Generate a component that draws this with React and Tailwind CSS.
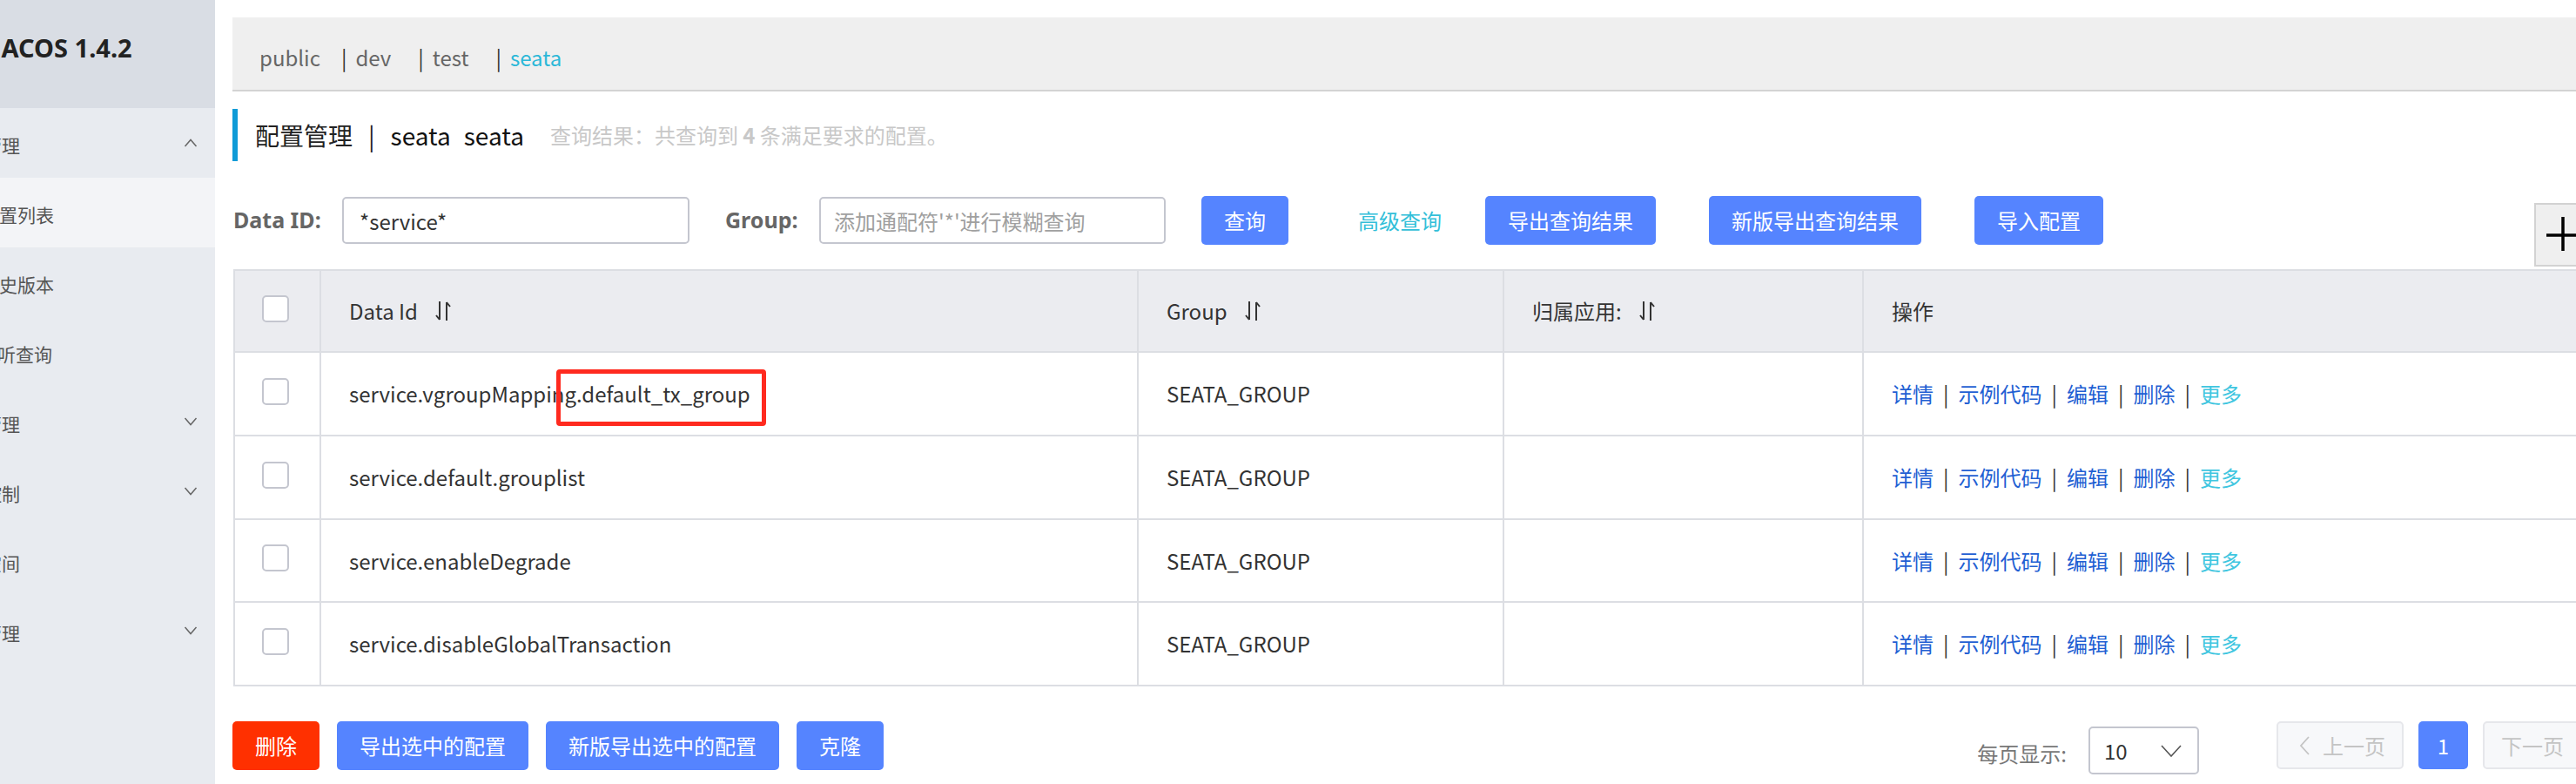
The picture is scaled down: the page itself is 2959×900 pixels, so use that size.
import React from "react";

const menu = [
  { label: "配置管理", shift: "-ml-[61px]", arrow: "up" },
  { label: "配置列表", shift: "-ml-[22px]", active: true },
  { label: "历史版本", shift: "-ml-[22px]" },
  { label: "监听查询", shift: "-ml-[24px]" },
  { label: "服务管理", shift: "-ml-[61px]", arrow: "down" },
  { label: "权限控制", shift: "-ml-[61px]", arrow: "down" },
  { label: "命名空间", shift: "-ml-[61px]" },
  { label: "集群管理", shift: "-ml-[61px]", arrow: "down" },
];

const rows = [
  "service.vgroupMapping.default_tx_group",
  "service.default.grouplist",
  "service.enableDegrade",
  "service.disableGlobalTransaction",
];

const rowHeights = ["h-[96px]", "h-[96px]", "h-[95px]", "h-[96px]"];

function Chevron({ dir }) {
  return (
    <svg width="16" height="10" viewBox="0 0 16 10" fill="none" stroke="#666" strokeWidth="1.5">
      {dir === "up" ? <path d="M1.5 9L8 1.5 14.5 9" /> : <path d="M1.5 1L8 8.5 14.5 1" />}
    </svg>
  );
}

function SortIcon() {
  return (
    <svg width="20" height="26" viewBox="0 0 20 26" fill="none" stroke="#333" strokeWidth="2">
      <path d="M6 2v21M6 23l-4-5M14 24V3M14 3l4 5" />
    </svg>
  );
}

function Checkbox() {
  return <div className="w-[31px] h-[31px] border-2 border-[#c4c6cf] rounded-[5px] bg-white" />;
}

function BlueButton({ children, className = "" }) {
  return (
    <button className={"h-[56px] px-[26px] rounded-[5px] bg-[#5584ff] text-white text-[24px] whitespace-nowrap " + className}>
      {children}
    </button>
  );
}

const grid = "grid grid-cols-[99px_939px_420px_413px_1fr] border-b-2 border-[#dcdee3]";
const cell = "flex items-center pl-[32px] border-r-2 border-[#dcdee3]";

export default function App() {
  return (
    <div className="relative flex w-[2959px] h-[900px] overflow-hidden bg-white text-[#333] font-['Noto_Sans_CJK_SC',sans-serif]">
      {/* 侧边栏 (左侧被裁切) */}
      <aside className="w-[247px] shrink-0 bg-[#e8ebf0] overflow-hidden">
        <div className="h-[124px] bg-[#d9dde4] flex items-center pb-[14px]">
          <span className="-ml-[22px] whitespace-nowrap font-['Noto_Sans',sans-serif] font-bold text-[29px] text-[#222]">
            NACOS 1.4.2
          </span>
        </div>
        {menu.map((m) => (
          <div
            key={m.label}
            className={
              "h-[80px] flex items-center justify-between pr-[20px] " + (m.active ? "bg-[#f3f4f7]" : "")
            }
          >
            <span className={m.shift + " pt-[5px] whitespace-nowrap text-[21px] text-[#555]"}>{m.label}</span>
            {m.arrow && <Chevron dir={m.arrow} />}
          </div>
        ))}
      </aside>

      {/* 主体 */}
      <main className="w-[2751px] shrink-0 pl-[20px] pt-[20px]">
        {/* 命名空间 */}
        <div className="h-[85px] bg-[#efefef] border-b-2 border-[#d3d3d3] flex items-center pl-[31px] pt-[8px] gap-[31px] text-[24px] text-[#666]">
          <span className="-mr-[7px]">public</span>
          {["dev", "test", "seata"].map((ns) => (
            <span key={ns} className="flex items-center">
              <span className="mr-[10px] text-[#333]">|</span>
              <span className={ns === "seata" ? "text-[#2bb8d8]" : ""}>{ns}</span>
            </span>
          ))}
        </div>

        {/* 标题 */}
        <div className="mt-[20px] h-[60px] border-l-[6px] border-[#0f9bd7] pl-[20px] flex items-center whitespace-nowrap">
          <span className="text-[28px] text-[#222]">配置管理</span>
          <span className="ml-[18px] text-[28px] text-[#222]">|</span>
          <span className="ml-[18px] text-[28px] text-[#111]">seata</span>
          <span className="ml-[15px] text-[28px] text-[#111]">seata</span>
          <span className="ml-[30px] text-[24px] text-[#c8c8c8]">
            查询结果：共查询到 <b className="font-bold">4</b> 条满足要求的配置。
          </span>
        </div>

        {/* 查询条件 */}
        <div className="mt-[40px] h-[56px] flex items-center whitespace-nowrap text-[24px]">
          <span className="w-[102px] pl-[1px] font-['Noto_Sans',sans-serif] font-bold text-[25px] text-[#666]">Data ID:</span>
          <input
            readOnly
            defaultValue="*service*"
            className="ml-[24px] w-[399px] h-[54px] border-2 border-[#c4c6cf] rounded-[5px] px-[18px] text-[24px] text-[#333] outline-none"
          />
          <span className="ml-[41px] w-[82px] font-['Noto_Sans',sans-serif] font-bold text-[25px] text-[#666]">Group:</span>
          <input
            readOnly
            placeholder="添加通配符'*'进行模糊查询"
            className="ml-[26px] w-[398px] h-[54px] border-2 border-[#c4c6cf] rounded-[5px] px-[15px] text-[24px] outline-none placeholder:text-[#a0a0a0]"
          />
          <BlueButton className="ml-[41px]">查询</BlueButton>
          <span className="ml-[80px] text-[#33bfd9]">高级查询</span>
          <BlueButton className="ml-[50px]">导出查询结果</BlueButton>
          <BlueButton className="ml-[61px]">新版导出查询结果</BlueButton>
          <BlueButton className="ml-[61px]">导入配置</BlueButton>
        </div>

        {/* 表格 */}
        <div className="mt-[28px] ml-[1px] border-t-2 border-l-2 border-[#dcdee3] text-[24px] whitespace-nowrap">
          <div className={grid + " h-[94px] bg-[#ebecf0]"}>
            <div className="flex items-center pl-[31px] pb-[6px] border-r-2 border-[#dcdee3]">
              <Checkbox />
            </div>
            <div className={cell + " gap-[19px]"}>
              Data Id <SortIcon />
            </div>
            <div className={cell + " gap-[19px]"}>
              Group <SortIcon />
            </div>
            <div className={cell + " gap-[19px]"}>
              归属应用: <SortIcon />
            </div>
            <div className={cell}>操作</div>
          </div>
          {rows.map((r, i) => (
            <div key={r} className={grid + " " + rowHeights[i]}>
              <div className="flex items-center pl-[31px] pb-[6px] border-r-2 border-[#dcdee3]">
                <Checkbox />
              </div>
              <div className={cell}>{r}</div>
              <div className={cell}>SEATA_GROUP</div>
              <div className={cell} />
              <div className={cell + " text-[#1f5fd3]"}>
                {["详情", "示例代码", "编辑", "删除"].map((op) => (
                  <React.Fragment key={op}>
                    <span>{op}</span>
                    <span className="mx-[11px] text-[#333]">|</span>
                  </React.Fragment>
                ))}
                <span className="text-[#3fc6e0]">更多</span>
              </div>
            </div>
          ))}
        </div>

        {/* 底部 */}
        <div className="mt-[40px] flex items-start justify-between text-[24px] whitespace-nowrap">
          <div className="flex gap-[20px]">
            <button className="h-[56px] px-[26px] rounded-[5px] bg-[#ff3000] text-white">删除</button>
            <BlueButton>导出选中的配置</BlueButton>
            <BlueButton>新版导出选中的配置</BlueButton>
            <BlueButton>克隆</BlueButton>
          </div>
          <div className="flex items-start">
            <span className="mt-[19px] text-[#777]">每页显示:</span>
            <div className="ml-[25px] mt-[6px] w-[127px] h-[55px] border-2 border-[#c4c6cf] rounded-[5px] flex items-center justify-between pl-[16px] pr-[18px]">
              <span className="text-[#333]">10</span>
              <svg width="24" height="14" viewBox="0 0 24 14" fill="none" stroke="#555" strokeWidth="1.6">
                <path d="M1 1l11 12 11-12" />
              </svg>
            </div>
            <div className="ml-[89px] w-[146px] h-[55px] border-2 border-[#e6e7eb] bg-[#f7f8fa] rounded-[5px] flex items-center pl-[23px] text-[#c4c4c4]">
              <svg width="14" height="24" viewBox="0 0 14 24" fill="none" stroke="#c4c4c4" strokeWidth="1.8">
                <path d="M12 2L3 12l9 10" />
              </svg>
              <span className="ml-[14px]">上一页</span>
            </div>
            <div className="ml-[17px] w-[57px] h-[55px] rounded-[5px] bg-[#5584ff] text-white flex items-center justify-center">1</div>
            <div className="ml-[17px] w-[146px] h-[55px] border-2 border-[#e6e7eb] bg-[#f7f8fa] rounded-[5px] flex items-center pl-[19px] text-[#c4c4c4]">
              <span>下一页</span>
              <svg className="ml-[14px]" width="14" height="24" viewBox="0 0 14 24" fill="none" stroke="#c4c4c4" strokeWidth="1.8">
                <path d="M2 2l9 10-9 10" />
              </svg>
            </div>
          </div>
        </div>
      </main>

      {/* 标注框 */}
      <div className="absolute left-[639px] top-[424px] w-[241px] h-[65px] border-[5px] border-[#ff2a1f] rounded-[4px]" />

      {/* 浮动加号 */}
      <div className="absolute left-[2911px] top-[233px] w-[70px] h-[73px] bg-[#efefef] border-2 border-[#d2d2d2]">
        <svg width="70" height="73" viewBox="0 0 70 73" fill="none" stroke="#000" strokeWidth="3.5">
          <path d="M31 14v39M12 35h40" />
        </svg>
      </div>
    </div>
  );
}
